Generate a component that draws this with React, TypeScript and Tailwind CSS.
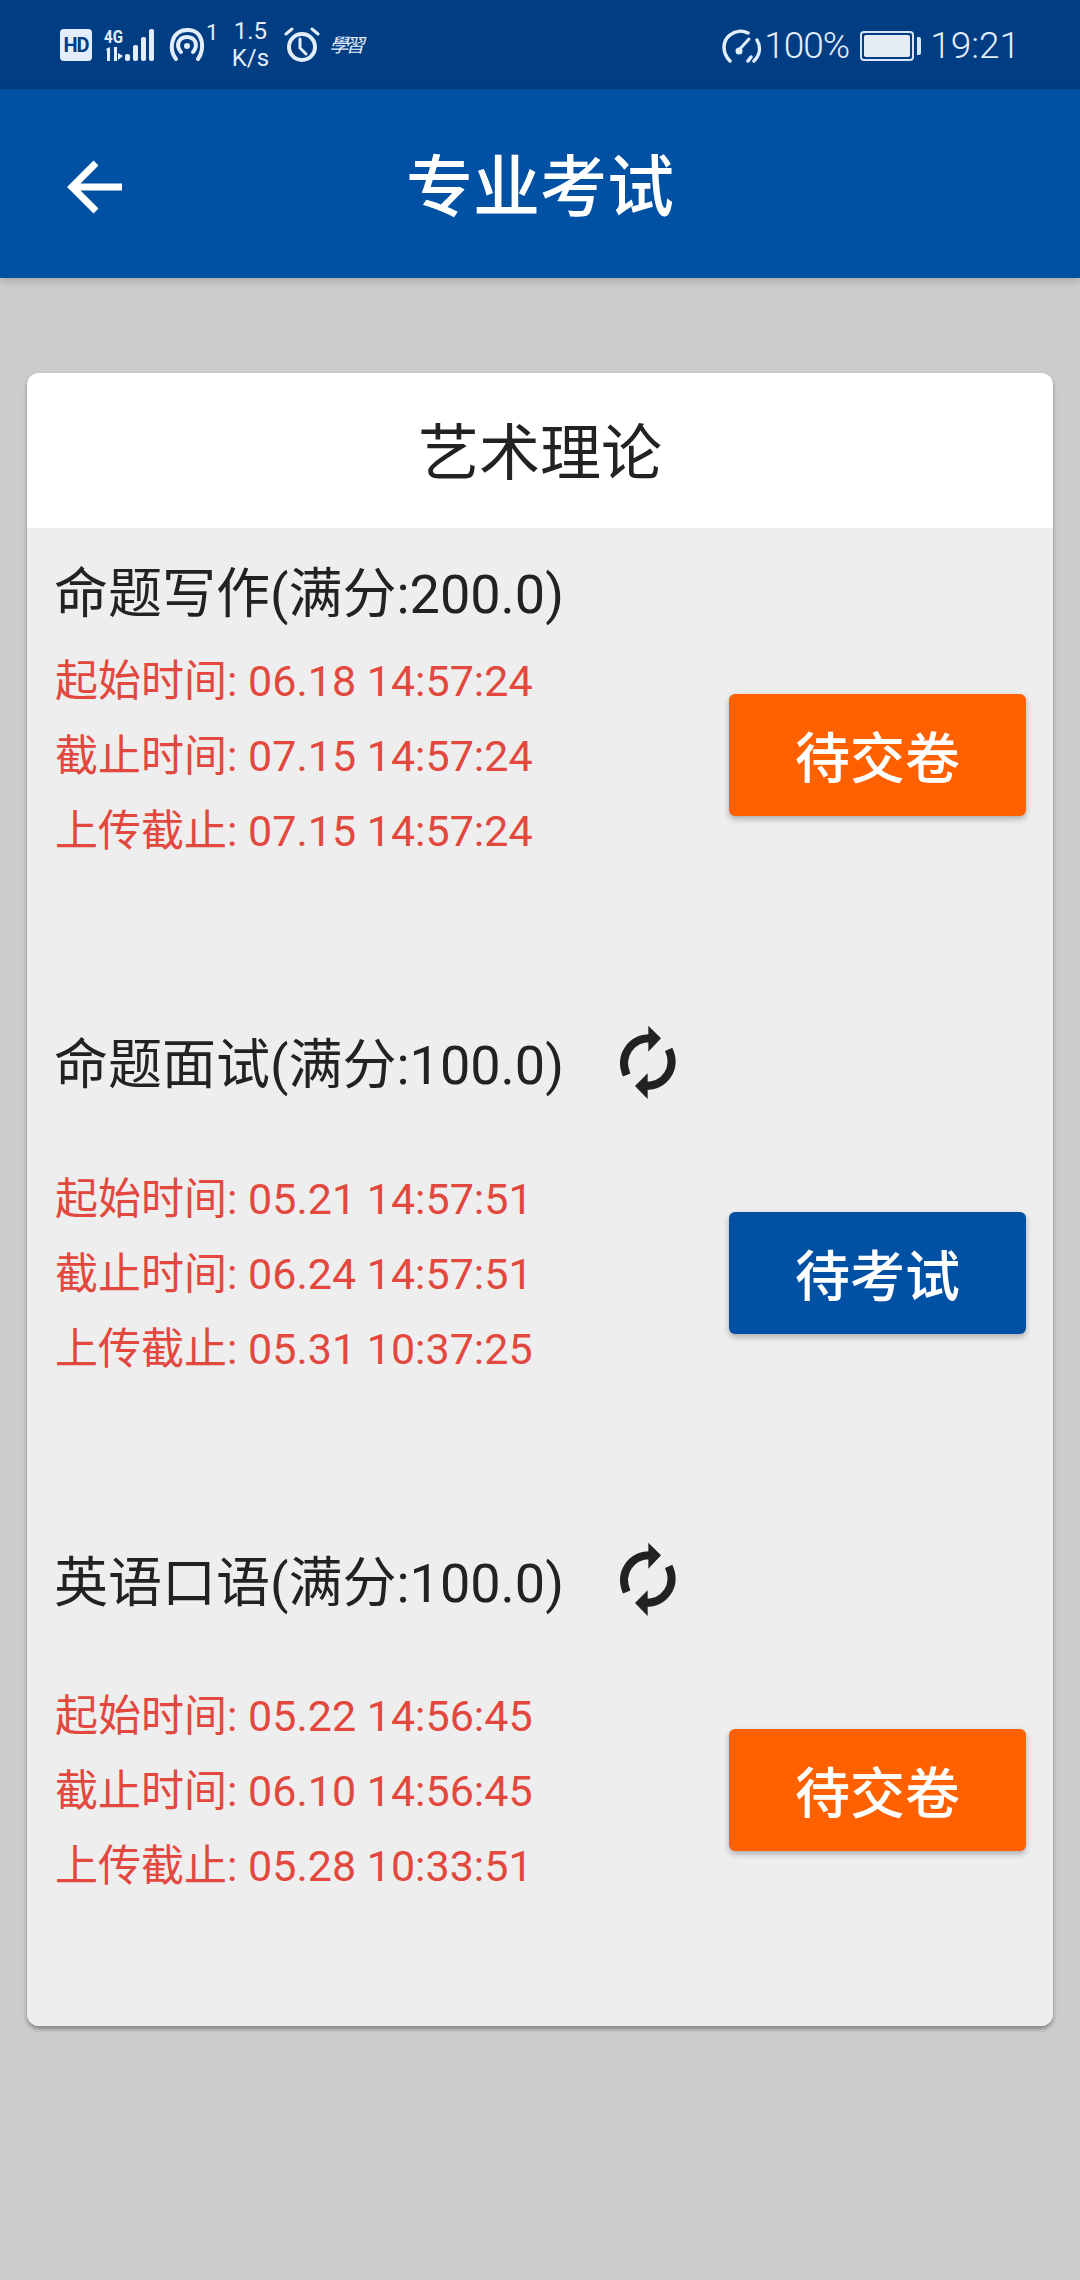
const exams = [
  {
    title: "命题写作(满分:200.0)",
    refresh: false,
    start: "06.18 14:57:24",
    end: "07.15 14:57:24",
    upload: "07.15 14:57:24",
    status: "待交卷",
  },
  {
    title: "命题面试(满分:100.0)",
    refresh: true,
    start: "05.21 14:57:51",
    end: "06.24 14:57:51",
    upload: "05.31 10:37:25",
    status: "待考试",
  },
  {
    title: "英语口语(满分:100.0)",
    refresh: true,
    start: "05.22 14:56:45",
    end: "06.10 14:56:45",
    upload: "05.28 10:33:51",
    status: "待交卷",
  },
];

function SignalIcon() {
  return (
    <svg width="52" height="34" viewBox="0 0 52 34" fill="#e3eefc" className="overflow-visible">
      <text x="0" y="15" fontFamily="Roboto" fontWeight="700" fontSize="18" textLength="19" lengthAdjust="spacingAndGlyphs">
        4G
      </text>
      <path d="M2 21l4-2v14H3V23zM10 19h3v14h-3zM14 25l5 3-5 4z" />
      <rect x="21" y="26" width="5" height="7" rx="2" />
      <rect x="29" y="17" width="5" height="16" rx="2" />
      <rect x="37" y="9" width="5" height="24" rx="2" />
      <rect x="45" y="1" width="5" height="32" rx="2" />
    </svg>
  );
}

function HotspotIcon() {
  return (
    <svg width="38" height="34" viewBox="0 0 38 34" fill="none" stroke="#e3eefc" strokeWidth="4" strokeLinecap="round">
      <path d="M8 31C1 22 2 3 19 2s18 20 11 29" />
      <path d="M13 24C7 17 11 9 19 9s12 8 6 15" />
      <circle cx="19" cy="18" r="3" fill="#e3eefc" stroke="none" />
    </svg>
  );
}

function AlarmIcon() {
  return (
    <svg width="36" height="36" viewBox="0 0 36 36" fill="none" stroke="#e3eefc" strokeLinecap="round">
      <circle cx="18" cy="20" r="13" strokeWidth="4" />
      <path d="M16 12v9l6 6" strokeWidth="3" />
      <path d="M2 7l6-5M34 7l-6-5" strokeWidth="3" />
    </svg>
  );
}

function GaugeIcon() {
  return (
    <svg width="40" height="34" viewBox="0 0 40 34" fill="none" stroke="#e3eefc" strokeWidth="3.5" strokeLinecap="round">
      <path d="M8 32C0 24 0 12 8 6c5-4 12-5 18-2" />
      <path d="M35 11c4 7 3 15-3 21" />
      <path d="M26 32l3-4" />
      <path d="M16 22l11-12" strokeWidth="3" />
      <circle cx="17" cy="22" r="3.5" fill="#e3eefc" stroke="none" />
    </svg>
  );
}

function BatteryIcon() {
  return (
    <div className="flex items-center gap-[3px]">
      <div className="w-[54px] h-[30px] rounded-[4px] border-2 border-[#d5e5fa] p-[2px]">
        <div className="w-full h-full rounded-[2px] bg-[#e6ecf5]"></div>
      </div>
      <div className="w-[4px] h-[18px] rounded-r-[2px] bg-[#d5e5fa]"></div>
    </div>
  );
}

function SyncIcon() {
  return (
    <svg width="110" height="110" viewBox="0 0 330 330" fill="none" className="shrink-0 mt-[3px]">
      <path d="M180 85C125 85 85 135 110 195M165 228C225 228 262 175 236 118" stroke="#222222" strokeWidth="24" />
      <path d="M175 47L213 85L175 125zM173 190L135 228L173 267z" fill="#222222" />
    </svg>
  );
}

function StatusBar() {
  return (
    <div className="h-[89px] bg-[#013d82] flex items-center justify-between pl-[60px] pr-[60px] text-[#e3eefc]">
      <div className="flex items-center">
        <div className="w-[32px] h-[32px] rounded-[4px] bg-[#e3eefc] text-[#013d82] text-[20px] leading-none font-bold flex items-center justify-center tracking-tighter">
          HD
        </div>
        <div className="ml-[12px]">
          <SignalIcon />
        </div>
        <div className="ml-[12px]">
          <HotspotIcon />
        </div>
        <span className="text-[22px] leading-none -mt-[24px]">1</span>
        <div className="ml-[13px] w-[38px] flex flex-col items-center text-[24px] leading-[27px]">
          <span>1.5</span>
          <span>K/s</span>
        </div>
        <div className="ml-[15px]">
          <AlarmIcon />
        </div>
        <span className="ml-[9px] text-[19px] italic font-['Noto_Sans_CJK_TC',serif] tracking-[-3px]">學習</span>
      </div>
      <div className="flex items-center pt-[2px]">
        <GaugeIcon />
        <span className="ml-[2px] text-[37px] font-light leading-none tracking-[-1px]">100%</span>
        <div className="ml-[11px]">
          <BatteryIcon />
        </div>
        <span className="ml-[9px] text-[37px] font-light leading-none">19:21</span>
      </div>
    </div>
  );
}

function Header() {
  return (
    <div className="relative z-10 h-[189px] bg-[#0050a3] border-b border-b-[#0c4f96] shadow-[0_3px_8px_rgba(0,0,0,0.18)] flex items-center justify-center">
      <svg
        width="60"
        height="60"
        viewBox="0 0 60 60"
        fill="none"
        stroke="white"
        strokeWidth="7"
        className="absolute left-[65px] top-[68px]"
      >
        <path d="M57 30H8M31 6L7 30l24 24" />
      </svg>
      <h1 className="text-[67px] font-medium text-white leading-none mt-[11px]">专业考试</h1>
    </div>
  );
}

function ExamRow({ exam, index }: { exam: (typeof exams)[number]; index: number }) {
  const first = index === 0;
  const lines = [
    ["起始时间", exam.start],
    ["截止时间", exam.end],
    ["上传截止", exam.upload],
  ];

  return (
    <div className={first ? "pt-[28px]" : index === 1 ? "pt-[146px]" : "pt-[145px]"}>
      <div className={`flex items-center text-[54px] text-[#222222] ${first ? "h-[72px]" : "h-[96px]"}`}>
        <span
          className={`w-[536px] -ml-[1px] shrink-0 whitespace-nowrap ${
            index === 1 ? "pt-[4px]" : index === 2 ? "pt-[7px]" : "pt-[5px]"
          }`}
        >
          {exam.title}
        </span>
        {exam.refresh && <SyncIcon />}
      </div>
      <div className={`flex items-center justify-between ${first ? "mt-[13px]" : "mt-[48px]"}`}>
        <div className="pt-[3px] text-[43px] leading-[75px] text-[#e2483e]">
          {lines.map(([label, value]) => (
            <div key={label} className="whitespace-nowrap">
              {label}: {value}
            </div>
          ))}
        </div>
        <div
          className={`w-[297px] h-[122px] pt-[8px] rounded-[6px] flex items-center justify-center text-[55px] font-medium text-white shadow-[0_3px_6px_rgba(0,0,0,0.28)] ${
            exam.status === "待考试" ? "bg-[#0050a3]" : "bg-[#ff6000]"
          }`}
        >
          {exam.status}
        </div>
      </div>
    </div>
  );
}

export default function App() {
  return (
    <div className="w-[1080px] h-[2280px] overflow-hidden bg-[#cccccc] font-['Roboto','Noto_Sans_CJK_SC',sans-serif]">
      <StatusBar />
      <Header />
      <div className="mx-[27px] mt-[95px] rounded-[12px] overflow-hidden shadow-[0_3px_4px_rgba(0,0,0,0.35)]">
        <div className="h-[155px] pt-[8px] bg-white flex items-center justify-center text-[61px] text-[#222222]">
          艺术理论
        </div>
        <div className="bg-[#eeeeee] pl-[28px] pr-[27px] pb-[122px]">
          {exams.map((exam, index) => (
            <ExamRow key={exam.title} exam={exam} index={index} />
          ))}
        </div>
      </div>
    </div>
  );
}
